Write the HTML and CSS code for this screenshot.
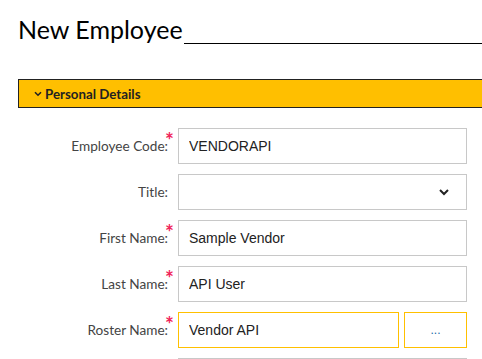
FILE: index.html
```html
<!DOCTYPE html>
<html lang="en">
<head>
    <meta charset="UTF-8">
    <title>New Employee</title>
    <link rel="stylesheet" href="styles.css">
</head>
<body>
    <div class="page">
        <div class="header">
            <h1>New Employee</h1>
            <div class="header-line"></div>
        </div>

        <div class="section-bar">
            <svg class="chev" width="8" height="6" viewBox="0 0 8 6"><path d="M1 1.2 L4 4.2 L7 1.2" fill="none" stroke="#222" stroke-width="1.6"/></svg>
            <span>Personal Details</span>
        </div>

        <div class="form">
            <div class="row">
                <label class="label req" for="code">Employee Code:<span class="star">*</span></label>
                <input type="text" id="code" class="field" value="VENDORAPI">
            </div>
            <div class="row">
                <label class="label">Title:</label>
                <div class="field select">
                    <svg width="12" height="8" viewBox="0 0 12 8"><path d="M2 2 L6 6 L10 2" fill="none" stroke="#222" stroke-width="2"/></svg>
                </div>
            </div>
            <div class="row">
                <label class="label req" for="first">First Name:<span class="star">*</span></label>
                <input type="text" id="first" class="field" value="Sample Vendor">
            </div>
            <div class="row">
                <label class="label req" for="last">Last Name:<span class="star">*</span></label>
                <input type="text" id="last" class="field" value="API User">
            </div>
            <div class="row">
                <label class="label req" for="roster">Roster Name:<span class="star">*</span></label>
                <div class="combo">
                    <input type="text" id="roster" class="field active" value="Vendor API">
                    <button class="more">...</button>
                </div>
            </div>
            <div class="row">
                <label class="label"></label>
                <div class="field"></div>
            </div>
        </div>
    </div>
</body>
</html>
```

FILE: styles.css
```css
html {
    font-family: Lato, "Noto Sans", sans-serif;
}
body {
    margin: 0;
    background: #fff;
    overflow: hidden;
}
.page {
    padding: 14px 0 0 18px;
}
.header {
    display: flex;
    align-items: flex-end;
}
.header h1 {
    margin: 0;
    font-size: 25px;
    font-weight: 400;
    line-height: 30px;
    color: #000;
}
.header-line {
    flex: 1;
    margin-left: 1px;
    border-bottom: 1px solid #000;
}
.section-bar {
    margin-top: 35px;
    height: 27px;
    display: flex;
    align-items: center;
    background: #ffbf00;
    border: 1px solid #222;
    border-right: 0;
    padding-left: 15px;
    font-size: 13.3px;
    font-weight: 700;
    color: #222;
}
.chev {
    margin-right: 3px;
}
.form {
    margin-top: 20px;
    display: flex;
    flex-direction: column;
    gap: 10px;
}
.row {
    display: grid;
    grid-template-columns: 160px 289px;
    align-items: center;
}
.label {
    position: relative;
    text-align: right;
    padding-right: 10px;
    font-size: 13.6px;
    color: #444;
}
.star {
    position: absolute;
    right: 4px;
    top: -11px;
    color: #f0245a;
    font-size: 21px;
    font-weight: 700;
}
.field {
    box-sizing: border-box;
    height: 36px;
    width: 289px;
    margin: 0;
    padding: 0 10px;
    border: 1px solid #c8c8c8;
    font-family: "Liberation Sans", Arial, sans-serif;
    font-size: 14px;
    color: #222;
    background: #fff;
    outline: none;
}
.select {
    display: flex;
    align-items: center;
    justify-content: flex-end;
    padding-right: 16px;
}
.combo {
    display: flex;
    gap: 5px;
}
.combo .field {
    width: 221px;
}
.field.active {
    border-color: #ffc000;
}
.more {
    box-sizing: border-box;
    width: 63px;
    height: 36px;
    border: 1px solid #ffc000;
    background: #fff;
    color: #1a6aa8;
    font-family: "Liberation Sans", Arial, sans-serif;
    font-size: 12px;
    padding: 0;
}
```
